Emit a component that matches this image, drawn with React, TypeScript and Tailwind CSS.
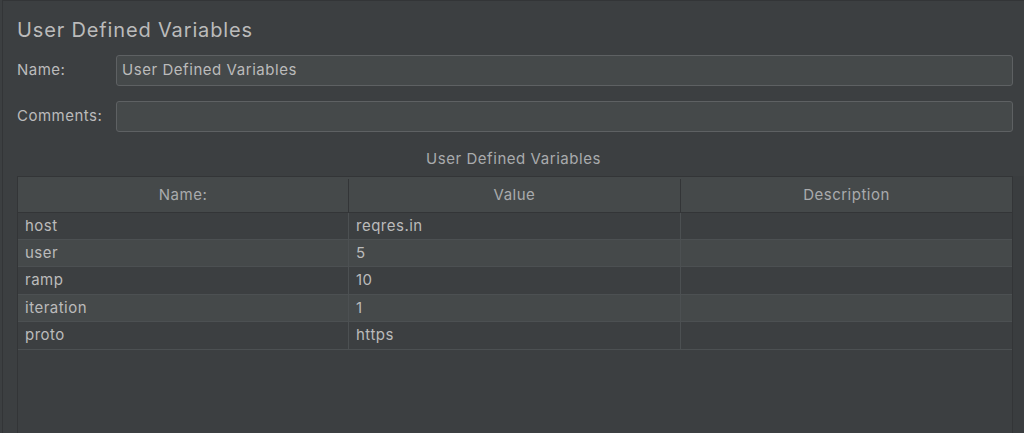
const rows = [
  { name: "host", value: "reqres.in", description: "" },
  { name: "user", value: "5", description: "" },
  { name: "ramp", value: "10", description: "" },
  { name: "iteration", value: "1", description: "" },
  { name: "proto", value: "https", description: "" },
];

function Field({ label, value }: { label: string; value?: string }) {
  return (
    <div className="flex items-center h-[31px]">
      <label className="w-[99px] shrink-0 text-[15px] tracking-[0.5px] text-[#bbbbbb]">{label}</label>
      <div className="flex-1 h-full flex items-center px-[5px] rounded-[3px] border border-[#5e6163] bg-[#45494a] text-[15px] tracking-[0.55px] text-[#bbbbbb]">
        {value}
      </div>
    </div>
  );
}

export default function App() {
  return (
    <div
      className="w-[1024px] h-[433px] overflow-hidden bg-[#3c3f41] pl-[2px]"
      style={{ fontFamily: "Inter, 'Noto Sans', sans-serif" }}
    >
      <div className="h-full border-l border-t border-[#333537] flex flex-col">
        <div className="pl-[14px] pr-[11px]">
          <h1 className="pt-[15px] h-[43px] text-[20px] leading-[28px] tracking-[0.85px] text-[#bbbbbb]">
            User Defined Variables
          </h1>
          <div className="flex flex-col gap-[15px] mt-[11px]">
            <Field label="Name:" value="User Defined Variables" />
            <Field label="Comments:" />
          </div>
        </div>

        <div className="mt-[17px] h-[20px] leading-[20px] text-center text-[15px] tracking-[0.55px] text-[#a9abad]">
          User Defined Variables
        </div>

        {/* variables table, scroll pane keeps going to the bottom */}
        <div className="flex flex-1 mt-[7px]">
          <div className="ml-[14px] w-[996px] flex flex-col border-l border-r border-t border-[#333537] bg-[#3c3f41]">
            <div className="grid grid-cols-[331px_332px_1fr] h-[36px] pt-[2px] bg-[#45494a] border-b border-[#333537] text-[15px] tracking-[0.5px] text-[#a9abad]">
              <div className="flex items-center justify-center border-r border-[#333537]">Name:</div>
              <div className="flex items-center justify-center border-r border-[#333537]">Value</div>
              <div className="flex items-center justify-center">Description</div>
            </div>
            {rows.map((r, i) => (
              <div
                key={r.name}
                className={
                  "grid grid-cols-[331px_332px_1fr] border-b border-[#4c5052] text-[15px] tracking-[0.5px] text-[#bbbbbb] " +
                  (i % 2 === 0 ? "bg-[#3c3f41] " : "bg-[#45494a] ") +
                  (i === 2 || i === 4 ? "h-[28px]" : "h-[27px]")
                }
              >
                <div className="flex items-center pl-[7px] border-r border-[#4c5052]">{r.name}</div>
                <div className="flex items-center pl-[7px] border-r border-[#4c5052]">{r.value}</div>
                <div className="flex items-center pl-[7px]">{r.description}</div>
              </div>
            ))}
          </div>
          <div className="flex-1 bg-[#3a3d3f]" />
        </div>
      </div>
    </div>
  );
}
